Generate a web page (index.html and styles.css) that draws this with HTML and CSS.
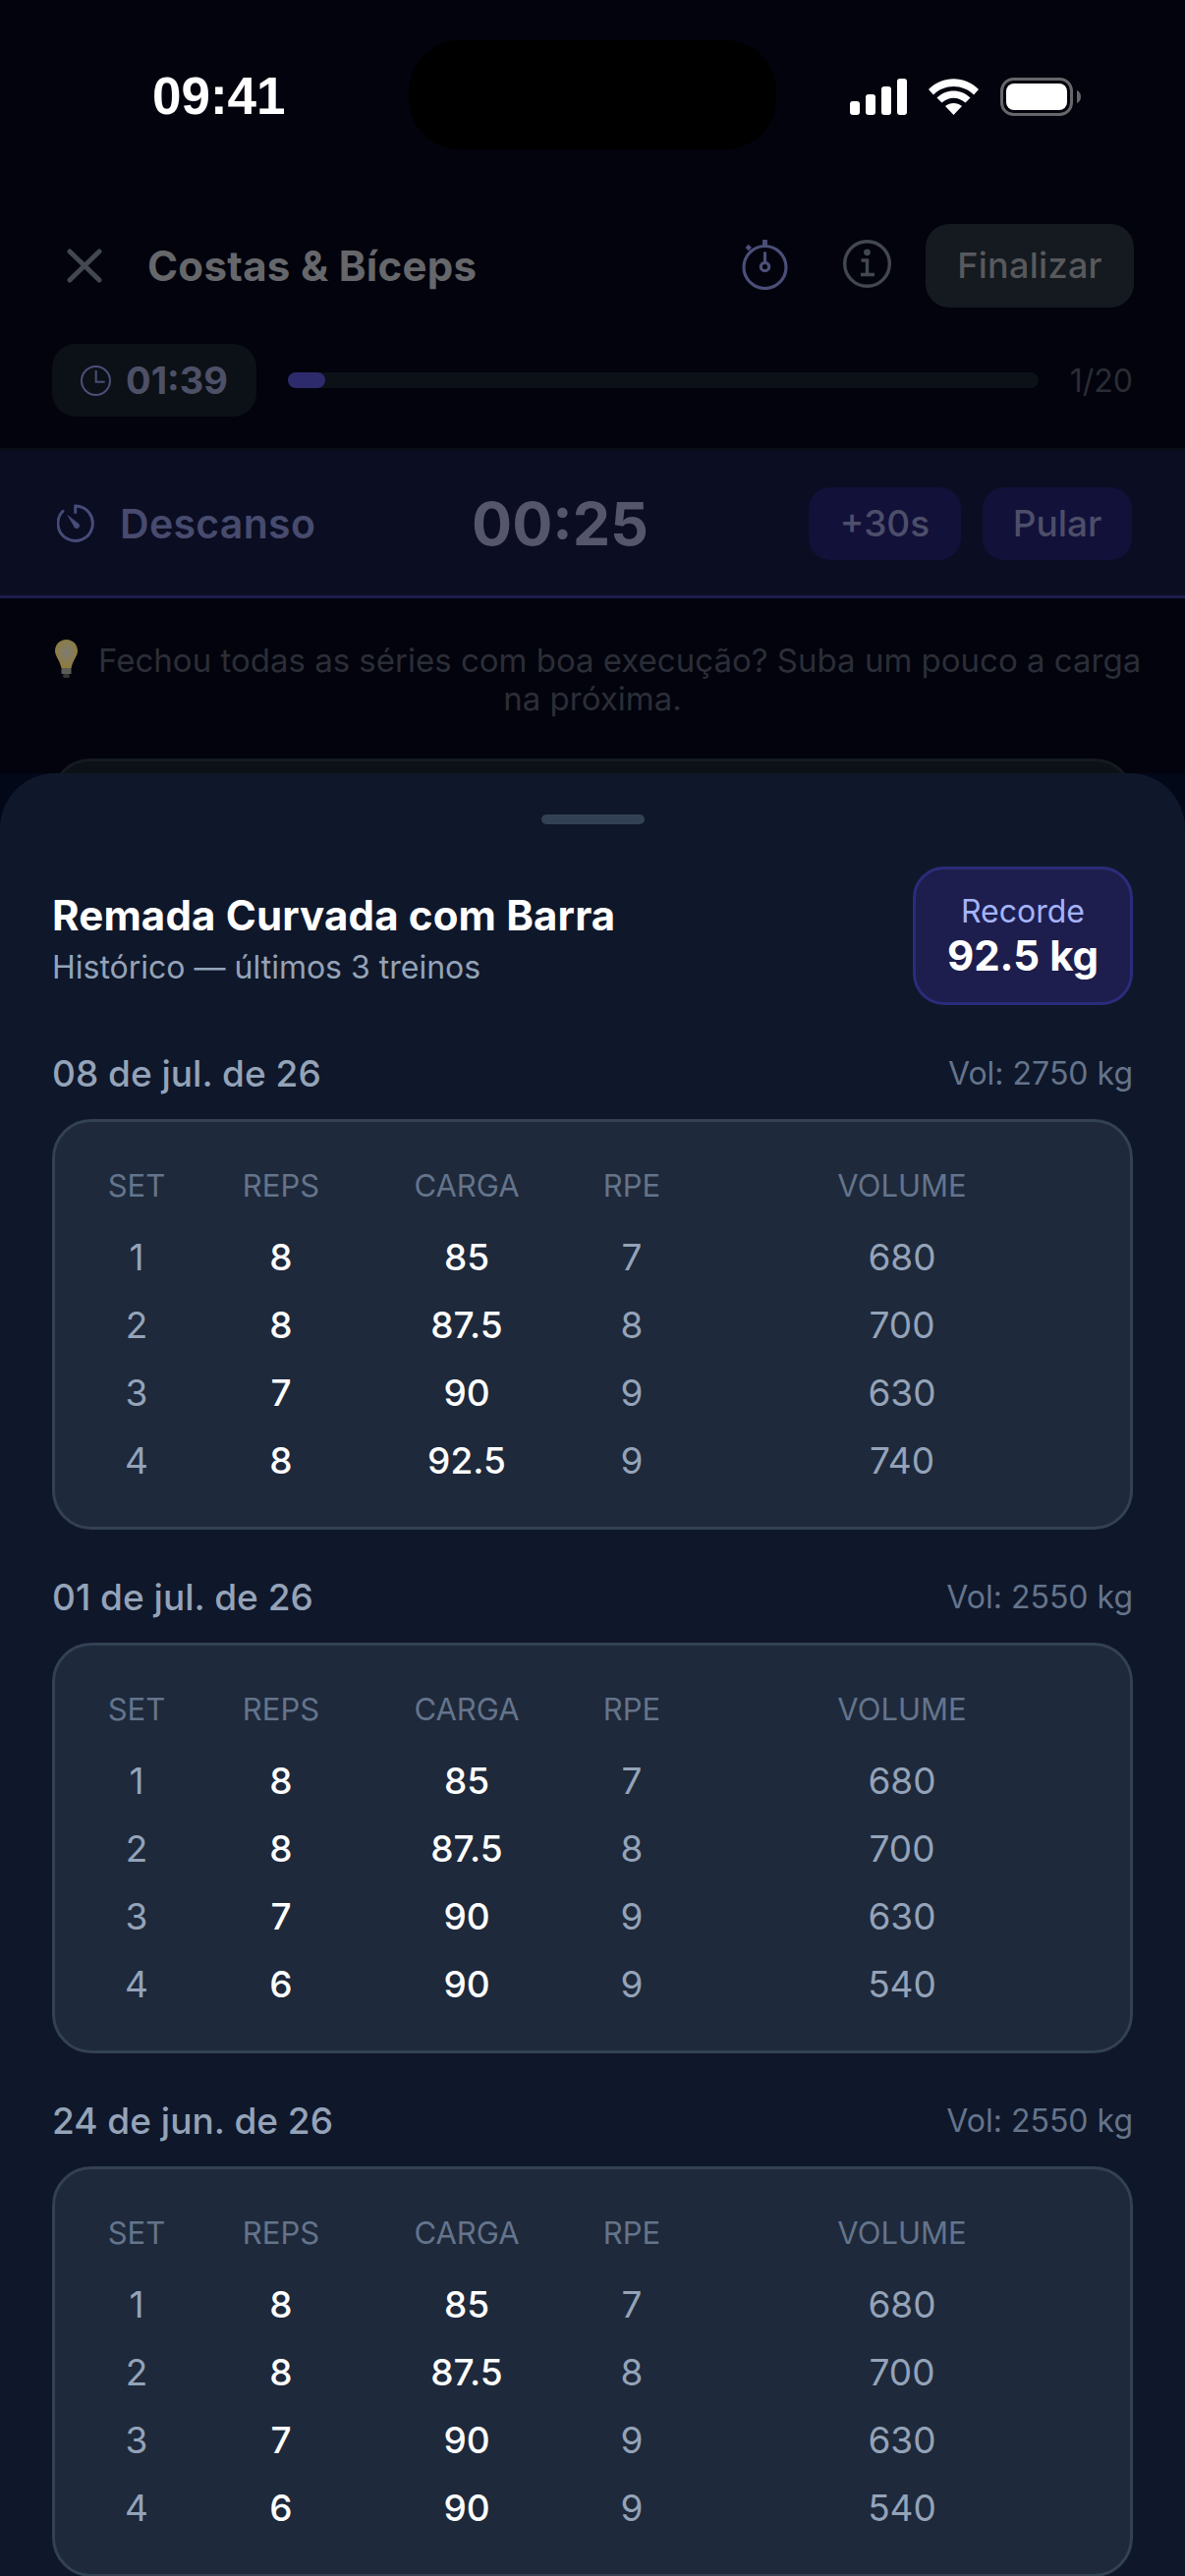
FILE: index.html
```html
<!DOCTYPE html>
<html lang="pt-BR">
<head>
<meta charset="UTF-8">
<title>Costas &amp; Bíceps</title>
<link rel="stylesheet" href="styles.css">
</head>
<body>

<div class="screen">

  <div class="behind">
    <div class="statusbar">
      <span class="clock">09:41</span>
      <div class="island"></div>
      <div class="status-icons">
        <svg width="58" height="37" viewBox="0 0 58 37"><g fill="#fff"><rect x="0" y="23" width="10" height="14" rx="3"/><rect x="16" y="16" width="10" height="21" rx="3"/><rect x="32" y="8" width="10" height="29" rx="3"/><rect x="48" y="0" width="10" height="37" rx="3"/></g></svg>
        <svg width="51" height="37" viewBox="0 0 51 37"><g fill="#fff"><path d="M0 11C14 -3.5 37 -3.5 51 11L46 16.5C35 5 16 5 5 16.5Z"/><path d="M8.5 19.5C18 10 33 10 42.5 19.5L37.5 24.5C30 18 21 18 13.5 24.5Z"/><path d="M17 28C22 24 29 24 34 28L25.5 37Z"/></g></svg>
        <svg width="82" height="39" viewBox="0 0 82 39"><rect x="1.5" y="1.5" width="71" height="36" rx="12" fill="none" stroke="#66666b" stroke-width="3"/><rect x="6" y="6" width="62" height="27" rx="8" fill="#fff"/><path d="M78 13C80.500 14 82 16.500 82 19.500S80.500 25 78 26Z" fill="#66666b"/></svg>
      </div>
    </div>

    <div class="topbar">
      <svg class="close" width="36" height="35" viewBox="0 0 36 35"><path d="M3 3L33 32M33 3L3 32" stroke="#434850" stroke-width="5" stroke-linecap="round"/></svg>
      <span class="workout">Costas &amp; Bíceps</span>
      <svg class="ic-watch" width="47" height="51" viewBox="0 0 47 51"><g fill="none" stroke="#4b4f78" stroke-width="3.200"><circle cx="23.500" cy="28" r="21.500"/><path d="M23.500 1.500V5" stroke-width="5" stroke-linecap="round"/><path d="M5 6.500L8.500 9.500" stroke-width="4.500"/><path d="M23.500 13.500V23" stroke-linecap="round"/><circle cx="23.500" cy="27.500" r="4.200"/></g></svg>
      <svg class="ic-info" width="49" height="49" viewBox="0 0 49 49"><g fill="none" stroke="#434850" stroke-width="3.400"><circle cx="24.500" cy="24.500" r="22.800"/><path d="M18.500 21H24.500V35.500M18 35.500H32"/></g><circle cx="24.500" cy="12.800" r="3.400" fill="#434850"/></svg>
      <span class="finish">Finalizar</span>
    </div>

    <div class="progress-row">
      <div class="elapsed">
        <svg width="31" height="31" viewBox="0 0 31 31"><g fill="none" stroke="#4b4f78" stroke-width="2"><circle cx="15.500" cy="15.500" r="14.500"/><path d="M15.700 5V16.700H24.700"/></g></svg>
        <span>01:39</span>
      </div>
      <div class="track"><div class="fill"></div></div>
      <span class="count">1/20</span>
    </div>

    <div class="rest">
      <div class="rest-label">
        <svg width="40" height="40" viewBox="0 0 40 40"><path d="M18.700 2A17.700 17.700 0 1 1 6 7.300M18.700 2V8.500" fill="none" stroke="#474b78" stroke-width="3" stroke-linecap="round"/><path d="M10 10.500L21.500 19.500A3 3 0 1 1 17 22.500Z" fill="#474b78"/></svg>
        <span>Descanso</span>
      </div>
      <span class="rest-time">00:25</span>
      <div class="rest-btns">
        <span class="rest-btn plus">+30s</span>
        <span class="rest-btn skip">Pular</span>
      </div>
    </div>

    <p class="tip"><span class="bulb"><svg width="23" height="39" viewBox="0 0 23 39"><defs><radialGradient id="glass" cx="50%" cy="45%" r="55%"><stop offset="0" stop-color="#7d7c76"/><stop offset="1" stop-color="#8f7c3a"/></radialGradient></defs><path d="M11.500 0C18 0 23 5 23 11.500C23 17 18.500 20 16.500 29H6.500C4.500 20 0 17 0 11.500C0 5 5 0 11.500 0Z" fill="url(#glass)"/><rect x="6.500" y="29" width="10" height="6" fill="#5c5b55"/><rect x="8" y="35" width="7" height="4" rx="2" fill="#35352f"/></svg></span> Fechou todas as séries com boa execução? Suba um pouco a carga na próxima.</p>

    <div class="peek"></div>
  </div>

  <div class="backdrop">
    <div class="sheet">
      <div class="handle"></div>

      <div class="sheet-head">
        <div class="sheet-title">
          <h2>Remada Curvada com Barra</h2>
          <p>Histórico — últimos 3 treinos</p>
        </div>
        <div class="record">
          <span>Recorde</span>
          <strong>92.5 kg</strong>
        </div>
      </div>

      <section class="session">
        <div class="session-head"><span class="date">08 de jul. de 26</span><span class="vol">Vol: 2750 kg</span></div>
        <div class="card">
          <table>
            <thead><tr><th>SET</th><th>REPS</th><th>CARGA</th><th>RPE</th><th>VOLUME</th></tr></thead>
            <tbody>
              <tr><td>1</td><td class="b">8</td><td class="b">85</td><td>7</td><td>680</td></tr>
              <tr><td>2</td><td class="b">8</td><td class="b">87.5</td><td>8</td><td>700</td></tr>
              <tr><td>3</td><td class="b">7</td><td class="b">90</td><td>9</td><td>630</td></tr>
              <tr><td>4</td><td class="b">8</td><td class="b">92.5</td><td>9</td><td>740</td></tr>
            </tbody>
          </table>
        </div>
      </section>

      <section class="session">
        <div class="session-head"><span class="date">01 de jul. de 26</span><span class="vol">Vol: 2550 kg</span></div>
        <div class="card">
          <table>
            <thead><tr><th>SET</th><th>REPS</th><th>CARGA</th><th>RPE</th><th>VOLUME</th></tr></thead>
            <tbody>
              <tr><td>1</td><td class="b">8</td><td class="b">85</td><td>7</td><td>680</td></tr>
              <tr><td>2</td><td class="b">8</td><td class="b">87.5</td><td>8</td><td>700</td></tr>
              <tr><td>3</td><td class="b">7</td><td class="b">90</td><td>9</td><td>630</td></tr>
              <tr><td>4</td><td class="b">6</td><td class="b">90</td><td>9</td><td>540</td></tr>
            </tbody>
          </table>
        </div>
      </section>

      <section class="session">
        <div class="session-head"><span class="date">24 de jun. de 26</span><span class="vol">Vol: 2550 kg</span></div>
        <div class="card">
          <table>
            <thead><tr><th>SET</th><th>REPS</th><th>CARGA</th><th>RPE</th><th>VOLUME</th></tr></thead>
            <tbody>
              <tr><td>1</td><td class="b">8</td><td class="b">85</td><td>7</td><td>680</td></tr>
              <tr><td>2</td><td class="b">8</td><td class="b">87.5</td><td>8</td><td>700</td></tr>
              <tr><td>3</td><td class="b">7</td><td class="b">90</td><td>9</td><td>630</td></tr>
              <tr><td>4</td><td class="b">6</td><td class="b">90</td><td>9</td><td>540</td></tr>
            </tbody>
          </table>
        </div>
      </section>
    </div>
  </div>

</div>

</body>
</html>
```
FILE: styles.css
```css
html,body{margin:0;padding:0;background:#02030d}
body{font-family:Inter,"Liberation Sans",sans-serif}
.screen{width:1206px;height:2622px;overflow:hidden;position:relative;background:#02030d}

.statusbar{height:228px;display:flex;align-items:flex-start;justify-content:space-between;padding:68px 106px 0 155px;box-sizing:border-box;position:relative}
.clock{color:#fff;font:600 53px/60px "Liberation Sans",sans-serif}
.island{position:absolute;left:416px;top:41px;width:374px;height:111px;border-radius:52px;background:#000}
.status-icons{display:flex;align-items:center;gap:22px;height:60px}

.topbar{height:85px;padding:0 52px 0 68px;display:flex;align-items:center}
.close{margin-right:46px}
.workout{color:#66676a;font-size:42px;font-weight:700;letter-spacing:.3px;flex:1}
.ic-watch{margin:0 56px 2px 0}
.ic-info{margin:0 35px 4px 0}
.finish{background:#141a20;color:#58595c;font-size:36px;font-weight:500;letter-spacing:.3px;height:85px;line-height:85px;width:212px;text-align:center;border-radius:24px}

.progress-row{display:flex;align-items:center;gap:32px;padding:0 53px;margin-top:37px}
.elapsed{width:208px;height:74px;border-radius:24px;background:#0c1117;display:flex;align-items:center;justify-content:center;gap:15px;color:#4d5066;font-size:38px;font-weight:700}
.track{flex:1;height:16px;border-radius:8px;background:#0c1117}
.fill{width:38px;height:16px;border-radius:8px;background:#2d2b6b}
.count{color:#2a2c33;font-size:32px}

.rest{margin-top:32px;height:153px;box-sizing:border-box;background:#0b0d22;border-top:3px solid #0a0c18;border-bottom:3px solid #1f1c4f;display:flex;align-items:center;padding:0 54px 0 58px}
.rest-label{width:422px;display:flex;align-items:center;gap:24px;color:#474b6e;font-size:41px;font-weight:600;letter-spacing:.3px}
.rest-time{color:#55566b;font-size:61px;font-weight:700}
.rest-btns{margin-left:auto;display:flex;gap:22px}
.rest-btn{height:74px;line-height:74px;border-radius:22px;background:#12113a;color:#4d4e6a;font-size:37px;font-weight:500;text-align:center}
.plus{width:155px}
.skip{width:152px}

.tip{margin:44px 40px 0;color:#2b2e37;font-size:33px;line-height:39px;text-align:center}
.bulb{display:inline-block;width:46px;height:0}
.bulb svg{display:block;margin:-33px auto 0}
.peek{position:absolute;left:52px;right:52px;top:772px;height:100px;border:3px solid #141a20;border-radius:40px;background:#0c1117;box-sizing:border-box}

.backdrop{position:absolute;left:0;right:0;top:787px;bottom:0;background:#030819}
.sheet{height:100%;background:#0f172a;border-radius:56px 56px 0 0;padding:0 53px;box-sizing:border-box}
.handle{width:105px;height:10px;border-radius:5px;background:#334155;margin:0 auto;position:relative;top:42px}

.sheet-head{display:flex;justify-content:space-between;align-items:flex-start;padding:85px 0 1px}
.sheet-title{padding-top:26px}
.sheet-head h2{margin:0;color:#fff;font-size:42px;font-weight:700;letter-spacing:.15px;line-height:48px}
.sheet-head p{margin:9px 0 0;color:#94a3b8;font-size:32px;line-height:40px}
.record{width:224px;height:141px;box-sizing:border-box;border:3px solid #2b2c7a;border-radius:32px;background:#1d1e4d;display:flex;flex-direction:column;align-items:center;justify-content:center}
.record span{color:#a5b4fc;font-size:32px;line-height:40px}
.record strong{color:#fff;font-size:42px;line-height:50px;font-weight:700}

.session{margin-top:44px}
.session-head{display:flex;justify-content:space-between;align-items:center;height:48px;margin-bottom:23px}
.date{color:#94a3b8;font-size:37px;font-weight:500}
.vol{color:#64748b;font-size:32px}

.card{height:418px;box-sizing:border-box;border:3px solid #334155;border-radius:40px;background:#1e293b;padding:25px 34px 0}
table{width:1026px;border-collapse:collapse;table-layout:fixed}
th{color:#64748b;font-size:31px;font-weight:400;height:78px;padding:0}
td{color:#94a3b8;font-size:37px;height:69px;text-align:center;padding:0}
td.b{color:#fff;font-weight:500}
th:nth-child(1){width:98px}
th:nth-child(2){width:196px}
th:nth-child(3){width:182px}
th:nth-child(4){width:154px}
```
